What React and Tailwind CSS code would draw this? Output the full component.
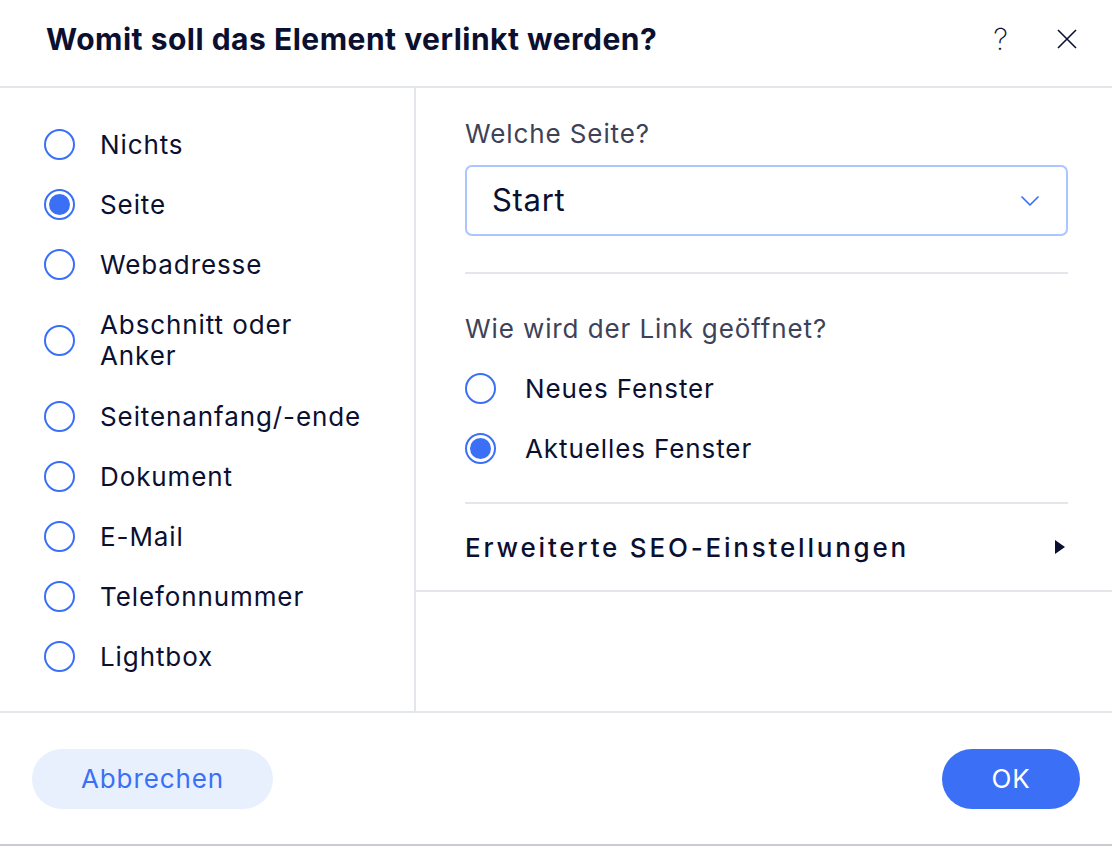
import { ChevronDown } from 'lucide-react'

const LINK_TYPES = [
  'Nichts',
  'Seite',
  'Webadresse',
  'Abschnitt oder Anker',
  'Seitenanfang/-ende',
  'Dokument',
  'E-Mail',
  'Telefonnummer',
  'Lightbox',
]

function Radio({ checked }) {
  return (
    <span className="w-[31px] h-[31px] rounded-full border-2 border-[#3b70f6] flex items-center justify-center flex-shrink-0 bg-white">
      {checked && <span className="w-[21px] h-[21px] rounded-full bg-[#3b70f6]" />}
    </span>
  )
}

export default function App() {
  return (
    <div className="w-[1112px] h-[848px] bg-white text-[#0b1030] overflow-hidden"
      style={{ fontFamily: 'Inter, "Noto Sans", sans-serif' }}>
      <div className="h-[846px] flex flex-col border-b-2 border-[#c9cbd0]">
        {/* Header */}
        <div className="h-[88px] flex items-center justify-between pl-[46px] pr-[34px] pb-[8px] border-b-2 border-[#e3e6ea]">
          <h1 className="text-[30px] font-bold tracking-[0.5px]">Womit soll das Element verlinkt werden?</h1>
          <div className="flex items-center gap-[48px]">
            <span className="text-[30px] font-extralight leading-none">?</span>
            <svg width="22" height="22" viewBox="0 0 22 22" fill="none" stroke="#0b1030" strokeWidth="1.6">
              <path d="M2 2 L20 20 M20 2 L2 20" />
            </svg>
          </div>
        </div>

        {/* Body */}
        <div className="flex h-[625px] border-b-2 border-[#e3e6ea]">
          <div className="w-[416px] border-r-2 border-[#e3e6ea] pt-[26px] pl-[44px] flex flex-col">
            {LINK_TYPES.map(t => (
              <div key={t} className={`flex items-center gap-[25px] ${t === 'Abschnitt oder Anker' ? 'h-[92px]' : 'h-[60px]'}`}>
                <Radio checked={t === 'Seite'} />
                <span className={`text-[26px] tracking-[0.9px] leading-[31px] ${t === 'Abschnitt oder Anker' ? 'w-[220px]' : ''}`}>{t}</span>
              </div>
            ))}
          </div>

          <div className="flex-1 flex flex-col">
            <div className="pl-[49px] pr-[44px] pt-[30px]">
              <p className="text-[26px] tracking-[0.9px] leading-[32px] text-[#3d4258]">Welche Seite?</p>
              <div className="mt-[15px] h-[71px] rounded-[7px] border-2 border-[#a9c6ff] flex items-center justify-between pl-[25px] pr-[20px]">
                <span className="text-[31px] tracking-[0.7px]">Start</span>
                <ChevronDown size={32} strokeWidth={1.3} className="text-[#3b70f6]" />
              </div>
              <div className="mt-[36px] border-t-2 border-[#e3e6ea]" />
              <p className="mt-[39px] text-[26px] tracking-[0.9px] leading-[32px] text-[#3d4258]">Wie wird der Link geöffnet?</p>
              <div className="mt-[13px] flex flex-col">
                <div className="h-[60px] flex items-center gap-[29px]">
                  <Radio />
                  <span className="text-[26px] tracking-[0.9px]">Neues Fenster</span>
                </div>
                <div className="h-[60px] flex items-center gap-[29px]">
                  <Radio checked />
                  <span className="text-[26px] tracking-[0.9px]">Aktuelles Fenster</span>
                </div>
              </div>
              <div className="mt-[24px] border-t-2 border-[#e3e6ea]" />
              <div className="h-[86px] flex items-center justify-between">
                <span className="text-[26px] font-medium tracking-[2.8px]">Erweiterte SEO-Einstellungen</span>
                <svg width="12" height="16" viewBox="0 0 12 16" className="mr-[2px]">
                  <path d="M1 1 L11 8 L1 15 Z" fill="#0b1030" />
                </svg>
              </div>
            </div>
            <div className="border-t-2 border-[#e3e6ea]" />
          </div>
        </div>

        {/* Footer */}
        <div className="flex-1 flex items-center justify-between pl-[32px] pr-[32px]">
          <button className="h-[60px] w-[241px] rounded-full bg-[#e8f0fe] text-[#3b70f6] text-[26px] tracking-[0.9px]">Abbrechen</button>
          <button className="h-[60px] w-[138px] rounded-full bg-[#3b70f6] text-white text-[26px] tracking-[0.9px]">OK</button>
        </div>
      </div>
    </div>
  )
}
